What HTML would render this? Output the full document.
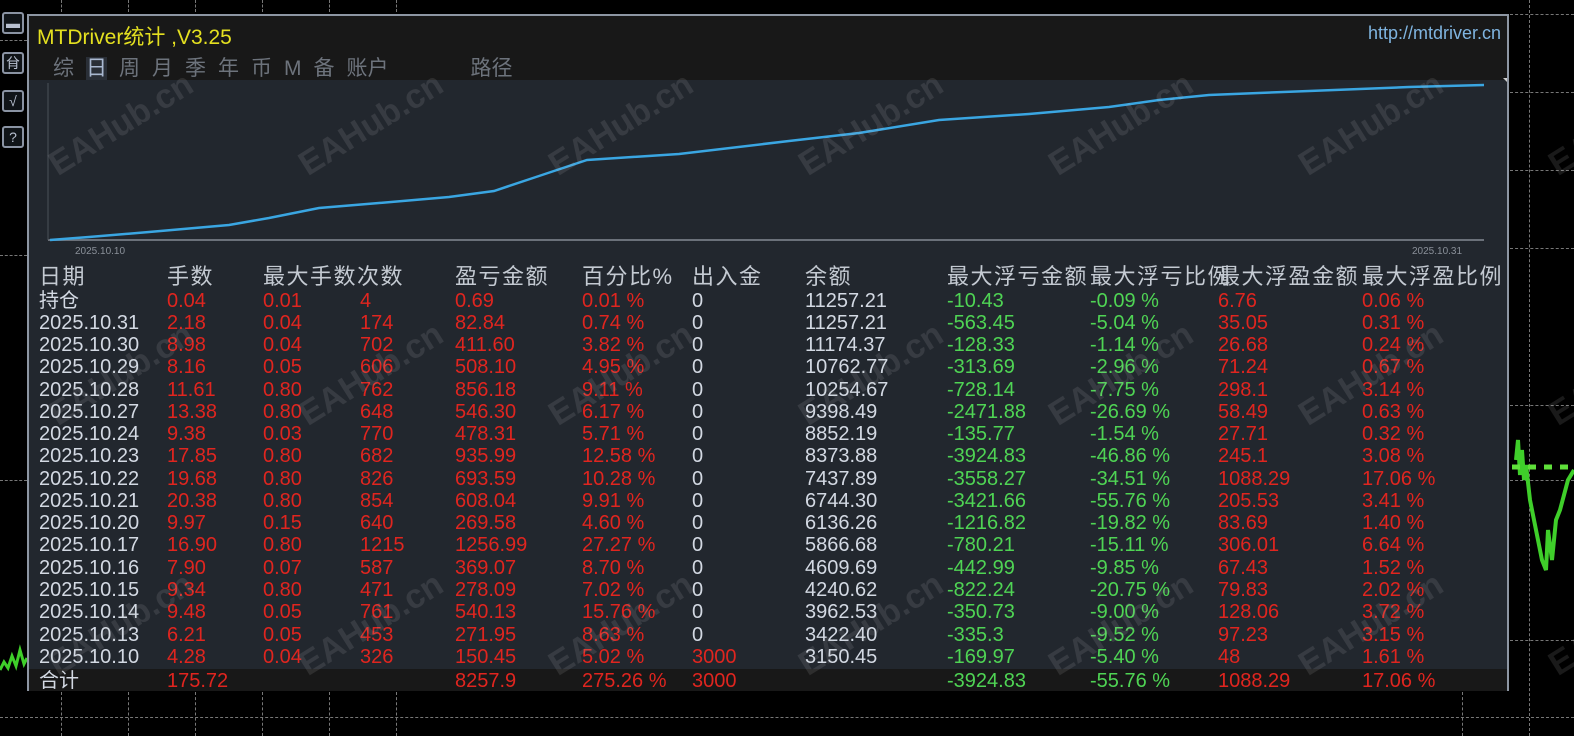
<!DOCTYPE html>
<html><head><meta charset="utf-8">
<style>
*{margin:0;padding:0;box-sizing:border-box}
body{width:1574px;height:736px;background:#000;position:relative;overflow:hidden;font-family:"Liberation Sans","Noto Sans CJK SC",sans-serif}
.vl{position:absolute;width:0;border-left:1px dashed #777}
.hl{position:absolute;height:0;border-top:1px dashed #777}
.btn{position:absolute;left:2px;width:22px;height:22px;border:2px solid #8a93a3;border-radius:3px;color:#b8c0d0;font-size:14px;text-align:center;line-height:18px;background:#101418}
#panel{position:absolute;left:27px;top:14px;width:1482px;height:677px;border:2px solid #8d96a3;background:#22272e}
#head{position:absolute;left:0;top:0;width:100%;height:64px;background:#181818}
.title{position:absolute;left:8px;top:5px;color:#e4e020;font-size:21px}
.url{position:absolute;right:6px;top:7px;color:#7fb4e0;font-size:18px}
.tabs{position:absolute;left:24px;top:36px;color:#6d737c;font-size:21px;letter-spacing:0}
.tabs span{margin-right:12px}
.row{position:absolute;left:0;height:22px;line-height:22px;font-size:20px;width:100%;white-space:nowrap}
.row span{position:absolute;top:0}
.c0{left:10px;color:#d3d9e3}.c1{left:138px}.c2{left:234px}.c3{left:331px}.c4{left:426px}.c5{left:553px}.c6{left:663px}.c7{left:776px;color:#d3d9e3}.c8{left:918px}.c9{left:1061px}.c10{left:1189px}.c11{left:1333px}
.r{color:#e0251f}.g{color:#4fd454}.w{color:#d3d9e3}
.hdr span{color:#c4cad2;font-size:22px;letter-spacing:1.5px}
.wm{position:absolute;color:rgba(200,200,200,0.13);font-size:34px;transform:rotate(-32deg);white-space:nowrap;font-weight:bold}
</style></head><body>
<div class="vl" style="left:61px;top:0;height:12px"></div>
<div class="vl" style="left:128px;top:0;height:12px"></div>
<div class="vl" style="left:195px;top:0;height:12px"></div>
<div class="vl" style="left:262px;top:0;height:12px"></div>
<div class="vl" style="left:329px;top:0;height:12px"></div>
<div class="vl" style="left:396px;top:0;height:12px"></div>
<div class="vl" style="left:1529px;top:0;height:736px"></div>
<div class="hl" style="left:1510px;top:14px;width:64px"></div>
<div class="hl" style="left:1510px;top:92px;width:64px"></div>
<div class="hl" style="left:1510px;top:170px;width:64px"></div>
<div class="hl" style="left:1510px;top:248px;width:64px"></div>
<div class="hl" style="left:1510px;top:405px;width:64px"></div>
<div class="hl" style="left:1510px;top:480px;width:64px"></div>
<div class="hl" style="left:1510px;top:640px;width:64px"></div>
<div class="hl" style="left:0;top:717px;width:1574px"></div>
<div class="hl" style="left:0;top:40px;width:27px"></div>
<div class="hl" style="left:0;top:255px;width:27px"></div>
<div class="hl" style="left:0;top:480px;width:27px"></div>
<div class="vl" style="left:61px;top:692px;height:44px"></div>
<div class="vl" style="left:128px;top:692px;height:44px"></div>
<div class="vl" style="left:195px;top:692px;height:44px"></div>
<div class="vl" style="left:262px;top:692px;height:44px"></div>
<div class="vl" style="left:329px;top:692px;height:44px"></div>
<div class="vl" style="left:396px;top:692px;height:44px"></div>
<div class="vl" style="left:1462px;top:692px;height:44px"></div>
<svg style="position:absolute;left:1508px;top:420px" width="66" height="180">
<polyline fill="none" stroke="#3fcf2a" stroke-width="4" points="8,40 10,20 12,55 14,30 16,60 18,45 22,80 26,100 30,120 34,140 38,150 40,110 44,140 48,100 52,90 56,75 60,60 66,50"/>
<line x1="4" y1="47" x2="66" y2="47" stroke="#5fe03a" stroke-width="5" stroke-dasharray="8,8"/>
</svg>
<svg style="position:absolute;left:0;top:640px" width="28" height="40"><polyline fill="none" stroke="#3fcf2a" stroke-width="3" points="0,30 4,22 8,28 12,16 16,26 20,10 24,24 27,18"/></svg>
<div class="btn" style="top:12px">▬</div>
<div class="btn" style="top:52px">䏌</div>
<div class="btn" style="top:90px">√</div>
<div class="btn" style="top:126px">?</div>
<div id="panel">
<div id="head">
<div class="title">MTDriver统计 ,V3.25</div>
<div class="url">http://mtdriver.cn</div>
<div class="tabs"><span>综</span><span style="color:#a9b8d0;background:#2a2f37">日</span><span>周</span><span>月</span><span>季</span><span>年</span><span>币</span><span>M</span><span>备</span><span>账户</span><span style="margin-left:70px">路径</span></div>
</div>
<svg style="position:absolute;left:0;top:62px" width="1478" height="200">
<line x1="19" y1="162" x2="1455" y2="162" stroke="#6b717a" stroke-width="2"/>
<line x1="19" y1="5" x2="19" y2="162" stroke="#4a5058" stroke-width="1"/>
<polyline fill="none" stroke="#3aa6e2" stroke-width="2.5" points="21,162 60,159 120,154 200,147 240,140 290,130 350,125 420,119 465,113 510,98 558,82 650,76 760,63 830,55 910,42 1000,36 1080,29 1130,22 1180,17 1280,13 1380,9 1455,7"/>
<polygon points="1474,0 1478,-4 1478,4" fill="#ccc"/>
<text x="46" y="176" fill="#8a9099" font-size="10" font-family="Liberation Sans">2025.10.10</text>
<text x="1383" y="176" fill="#8a9099" font-size="10" font-family="Liberation Sans">2025.10.31</text>
</svg>
<div class="row hdr" style="top:250px"><span class="c0" style="color:#c4cad2">日期</span><span class="c1">手数</span><span class="c2">最大手数次数</span><span class="c4">盈亏金额</span><span class="c5">百分比%</span><span class="c6">出入金</span><span class="c7" style="color:#c4cad2">余额</span><span class="c8">最大浮亏金额</span><span class="c9">最大浮亏比例</span><span class="c10">最大浮盈金额</span><span class="c11">最大浮盈比例</span></div>
<div class="row" style="top:274px"><span class="c0">持仓</span><span class="c1 r">0.04</span><span class="c2 r">0.01</span><span class="c3 r">4</span><span class="c4 r">0.69</span><span class="c5 r">0.01 %</span><span class="c6 w">0</span><span class="c7">11257.21</span><span class="c8 g">-10.43</span><span class="c9 g">-0.09 %</span><span class="c10 r">6.76</span><span class="c11 r">0.06 %</span></div>
<div class="row" style="top:296px"><span class="c0">2025.10.31</span><span class="c1 r">2.18</span><span class="c2 r">0.04</span><span class="c3 r">174</span><span class="c4 r">82.84</span><span class="c5 r">0.74 %</span><span class="c6 w">0</span><span class="c7">11257.21</span><span class="c8 g">-563.45</span><span class="c9 g">-5.04 %</span><span class="c10 r">35.05</span><span class="c11 r">0.31 %</span></div>
<div class="row" style="top:318px"><span class="c0">2025.10.30</span><span class="c1 r">8.98</span><span class="c2 r">0.04</span><span class="c3 r">702</span><span class="c4 r">411.60</span><span class="c5 r">3.82 %</span><span class="c6 w">0</span><span class="c7">11174.37</span><span class="c8 g">-128.33</span><span class="c9 g">-1.14 %</span><span class="c10 r">26.68</span><span class="c11 r">0.24 %</span></div>
<div class="row" style="top:340px"><span class="c0">2025.10.29</span><span class="c1 r">8.16</span><span class="c2 r">0.05</span><span class="c3 r">606</span><span class="c4 r">508.10</span><span class="c5 r">4.95 %</span><span class="c6 w">0</span><span class="c7">10762.77</span><span class="c8 g">-313.69</span><span class="c9 g">-2.96 %</span><span class="c10 r">71.24</span><span class="c11 r">0.67 %</span></div>
<div class="row" style="top:363px"><span class="c0">2025.10.28</span><span class="c1 r">11.61</span><span class="c2 r">0.80</span><span class="c3 r">762</span><span class="c4 r">856.18</span><span class="c5 r">9.11 %</span><span class="c6 w">0</span><span class="c7">10254.67</span><span class="c8 g">-728.14</span><span class="c9 g">-7.75 %</span><span class="c10 r">298.1</span><span class="c11 r">3.14 %</span></div>
<div class="row" style="top:385px"><span class="c0">2025.10.27</span><span class="c1 r">13.38</span><span class="c2 r">0.80</span><span class="c3 r">648</span><span class="c4 r">546.30</span><span class="c5 r">6.17 %</span><span class="c6 w">0</span><span class="c7">9398.49</span><span class="c8 g">-2471.88</span><span class="c9 g">-26.69 %</span><span class="c10 r">58.49</span><span class="c11 r">0.63 %</span></div>
<div class="row" style="top:407px"><span class="c0">2025.10.24</span><span class="c1 r">9.38</span><span class="c2 r">0.03</span><span class="c3 r">770</span><span class="c4 r">478.31</span><span class="c5 r">5.71 %</span><span class="c6 w">0</span><span class="c7">8852.19</span><span class="c8 g">-135.77</span><span class="c9 g">-1.54 %</span><span class="c10 r">27.71</span><span class="c11 r">0.32 %</span></div>
<div class="row" style="top:429px"><span class="c0">2025.10.23</span><span class="c1 r">17.85</span><span class="c2 r">0.80</span><span class="c3 r">682</span><span class="c4 r">935.99</span><span class="c5 r">12.58 %</span><span class="c6 w">0</span><span class="c7">8373.88</span><span class="c8 g">-3924.83</span><span class="c9 g">-46.86 %</span><span class="c10 r">245.1</span><span class="c11 r">3.08 %</span></div>
<div class="row" style="top:452px"><span class="c0">2025.10.22</span><span class="c1 r">19.68</span><span class="c2 r">0.80</span><span class="c3 r">826</span><span class="c4 r">693.59</span><span class="c5 r">10.28 %</span><span class="c6 w">0</span><span class="c7">7437.89</span><span class="c8 g">-3558.27</span><span class="c9 g">-34.51 %</span><span class="c10 r">1088.29</span><span class="c11 r">17.06 %</span></div>
<div class="row" style="top:474px"><span class="c0">2025.10.21</span><span class="c1 r">20.38</span><span class="c2 r">0.80</span><span class="c3 r">854</span><span class="c4 r">608.04</span><span class="c5 r">9.91 %</span><span class="c6 w">0</span><span class="c7">6744.30</span><span class="c8 g">-3421.66</span><span class="c9 g">-55.76 %</span><span class="c10 r">205.53</span><span class="c11 r">3.41 %</span></div>
<div class="row" style="top:496px"><span class="c0">2025.10.20</span><span class="c1 r">9.97</span><span class="c2 r">0.15</span><span class="c3 r">640</span><span class="c4 r">269.58</span><span class="c5 r">4.60 %</span><span class="c6 w">0</span><span class="c7">6136.26</span><span class="c8 g">-1216.82</span><span class="c9 g">-19.82 %</span><span class="c10 r">83.69</span><span class="c11 r">1.40 %</span></div>
<div class="row" style="top:518px"><span class="c0">2025.10.17</span><span class="c1 r">16.90</span><span class="c2 r">0.80</span><span class="c3 r">1215</span><span class="c4 r">1256.99</span><span class="c5 r">27.27 %</span><span class="c6 w">0</span><span class="c7">5866.68</span><span class="c8 g">-780.21</span><span class="c9 g">-15.11 %</span><span class="c10 r">306.01</span><span class="c11 r">6.64 %</span></div>
<div class="row" style="top:541px"><span class="c0">2025.10.16</span><span class="c1 r">7.90</span><span class="c2 r">0.07</span><span class="c3 r">587</span><span class="c4 r">369.07</span><span class="c5 r">8.70 %</span><span class="c6 w">0</span><span class="c7">4609.69</span><span class="c8 g">-442.99</span><span class="c9 g">-9.85 %</span><span class="c10 r">67.43</span><span class="c11 r">1.52 %</span></div>
<div class="row" style="top:563px"><span class="c0">2025.10.15</span><span class="c1 r">9.34</span><span class="c2 r">0.80</span><span class="c3 r">471</span><span class="c4 r">278.09</span><span class="c5 r">7.02 %</span><span class="c6 w">0</span><span class="c7">4240.62</span><span class="c8 g">-822.24</span><span class="c9 g">-20.75 %</span><span class="c10 r">79.83</span><span class="c11 r">2.02 %</span></div>
<div class="row" style="top:585px"><span class="c0">2025.10.14</span><span class="c1 r">9.48</span><span class="c2 r">0.05</span><span class="c3 r">761</span><span class="c4 r">540.13</span><span class="c5 r">15.76 %</span><span class="c6 w">0</span><span class="c7">3962.53</span><span class="c8 g">-350.73</span><span class="c9 g">-9.00 %</span><span class="c10 r">128.06</span><span class="c11 r">3.72 %</span></div>
<div class="row" style="top:608px"><span class="c0">2025.10.13</span><span class="c1 r">6.21</span><span class="c2 r">0.05</span><span class="c3 r">453</span><span class="c4 r">271.95</span><span class="c5 r">8.63 %</span><span class="c6 w">0</span><span class="c7">3422.40</span><span class="c8 g">-335.3</span><span class="c9 g">-9.52 %</span><span class="c10 r">97.23</span><span class="c11 r">3.15 %</span></div>
<div class="row" style="top:630px"><span class="c0">2025.10.10</span><span class="c1 r">4.28</span><span class="c2 r">0.04</span><span class="c3 r">326</span><span class="c4 r">150.45</span><span class="c5 r">5.02 %</span><span class="c6 r">3000</span><span class="c7">3150.45</span><span class="c8 g">-169.97</span><span class="c9 g">-5.40 %</span><span class="c10 r">48</span><span class="c11 r">1.61 %</span></div>
<div style="position:absolute;left:0;top:653px;width:1478px;height:22px;background:#181818"></div>
<div class="row" style="top:654px"><span class="c0">合计</span><span class="c1 r">175.72</span><span class="c4 r">8257.9</span><span class="c5 r">275.26 %</span><span class="c6 r">3000</span><span class="c8 g">-3924.83</span><span class="c9 g">-55.76 %</span><span class="c10 r">1088.29</span><span class="c11 r">17.06 %</span></div>
</div>
<div class="wm" style="left:40px;top:105px">EAHub.cn</div>
<div class="wm" style="left:290px;top:105px">EAHub.cn</div>
<div class="wm" style="left:540px;top:105px">EAHub.cn</div>
<div class="wm" style="left:790px;top:105px">EAHub.cn</div>
<div class="wm" style="left:1040px;top:105px">EAHub.cn</div>
<div class="wm" style="left:1290px;top:105px">EAHub.cn</div>
<div class="wm" style="left:1540px;top:105px">EAHub.cn</div>
<div class="wm" style="left:40px;top:355px">EAHub.cn</div>
<div class="wm" style="left:290px;top:355px">EAHub.cn</div>
<div class="wm" style="left:540px;top:355px">EAHub.cn</div>
<div class="wm" style="left:790px;top:355px">EAHub.cn</div>
<div class="wm" style="left:1040px;top:355px">EAHub.cn</div>
<div class="wm" style="left:1290px;top:355px">EAHub.cn</div>
<div class="wm" style="left:1540px;top:355px">EAHub.cn</div>
<div class="wm" style="left:40px;top:605px">EAHub.cn</div>
<div class="wm" style="left:290px;top:605px">EAHub.cn</div>
<div class="wm" style="left:540px;top:605px">EAHub.cn</div>
<div class="wm" style="left:790px;top:605px">EAHub.cn</div>
<div class="wm" style="left:1040px;top:605px">EAHub.cn</div>
<div class="wm" style="left:1290px;top:605px">EAHub.cn</div>
<div class="wm" style="left:1540px;top:605px">EAHub.cn</div>
</body></html>
